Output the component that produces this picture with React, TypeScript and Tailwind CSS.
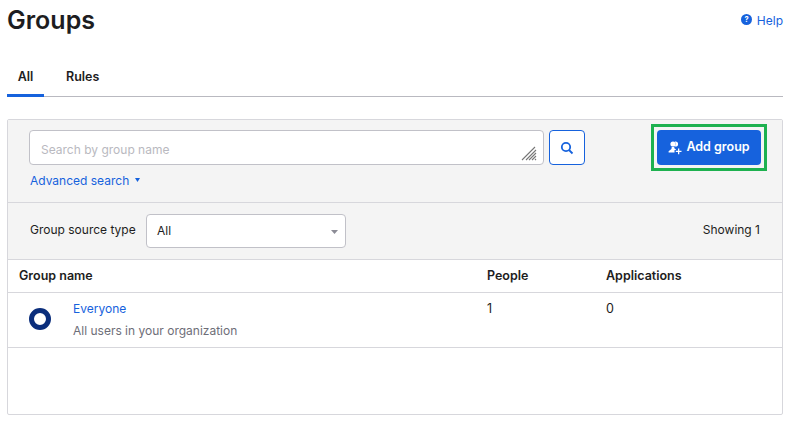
import React from "react";

const font = { fontFamily: '"Inter", "Liberation Sans", sans-serif' };

function Resize() {
  return (
    <svg width="16" height="16" viewBox="0 0 16 16" className="absolute right-[6px] bottom-[3px]" stroke="#777" strokeWidth="1.1" fill="none">
      <path d="M1 15L14 2M5 15L15 5M8 15L15 8M11 15L15 11M14 15L15 14" />
    </svg>
  );
}

export default function App() {
  return (
    <div className="w-[789px] h-[427px] bg-white overflow-hidden text-[#1d1d21]" style={font}>
      <div className="pl-[7px] pr-[6px]">
        <div className="flex justify-between h-[40px]">
          <h1 className="text-[25px] leading-[29px] font-semibold mt-[6px]">Groups</h1>
          <a className="flex items-center h-[16px] mt-[12px] text-[12px] text-[#1662dd] gap-[5px]">
            <svg width="11" height="11" viewBox="0 0 11 11" className="-ml-[1px] -mt-[1px]">
              <circle cx="5.5" cy="5.5" r="5.5" fill="#1662dd" />
              <text x="5.5" y="8.2" textAnchor="middle" fontSize="7.5" fontWeight="700" fill="#fff">?</text>
            </svg>
            <span className="mt-[1px]">Help</span>
          </a>
        </div>
        <div className="flex h-[57px] border-b border-[#b9b9c0] pt-[28px] text-[12.5px] font-semibold">
          <div className="w-[37px] h-[29px] pt-[1px] text-center leading-[16px] border-b-[3px] border-[#1662dd]">All</div>
          <div className="ml-[22px] pt-[1px] leading-[16px]">Rules</div>
        </div>
        <div className="mt-[22px] h-[296px] border border-[#d7d7dc] rounded-[2px] flex flex-col">
          <div className="h-[83px] bg-[#f4f4f4] border-b border-[#d7d7dc] flex pl-[21px] pr-[15px] shrink-0">
            <div className="w-[515px] pt-[10px]">
              <div className="relative h-[35px] bg-white border border-[#c1c1c8] rounded-[4px] flex items-center pl-[11px] pt-[4px] text-[12px] text-[#b9b9c0]">
                Search by group name
                <Resize />
              </div>
              <div className="mt-[8px] pl-[1px] flex items-center text-[12px] leading-[16px] text-[#1662dd]">
                Advanced search
                <svg width="5" height="4" viewBox="0 0 5 4" className="ml-[6px] -mt-[2px]"><path d="M0 0H5L2.5 4Z" fill="#1662dd" /></svg>
              </div>
            </div>
            <button className="ml-[5px] mt-[10px] w-[36px] h-[35px] bg-white border border-[#1662dd] rounded-[4px] flex items-center justify-center">
              <svg width="14" height="14" viewBox="0 0 14 14" fill="none" stroke="#1662dd" strokeWidth="1.8">
                <circle cx="6" cy="6" r="4.2" />
                <path d="M9 9L12.5 12.5" />
              </svg>
            </button>
            <div className="ml-auto mt-[4px] w-[116px] h-[47px] border-[3px] border-[#1db14f] flex items-center justify-center">
              <button className="w-[104px] h-[35px] bg-[#1662dd] rounded-[4px] text-white text-[12.5px] font-semibold flex items-center justify-center gap-[3px]">
                <svg width="15" height="15" viewBox="0 0 15 15" fill="#fff">
                  <circle cx="5" cy="4" r="2.6" />
                  <path d="M7.5 1.4a2.6 2.6 0 0 1 0 5.2c-.4 0-.6 0-.9-.2a3.6 3.6 0 0 0 0-4.8c.3-.2.5-.2.9-.2z" />
                  <path d="M3.7 7h2.6v1.2l1.5 1V10H6.5v2.4H0.6v-1.2l2.2-1.6C3.4 9.1 3.7 8.4 3.7 7z" />
                  <path d="M10 8.5h1.3v2.2h2.2V12h-2.2v2.2H10V12H7.8v-1.3H10z" />
                </svg>
                Add group
              </button>
            </div>
          </div>
          <div className="h-[57px] bg-[#f4f4f4] border-b border-[#d7d7dc] flex items-center pl-[22px] pr-[22px] text-[12px] shrink-0">
            <span className="w-[105px] whitespace-nowrap -mt-[2px]">Group source type</span>
            <div className="relative ml-[11px] w-[200px] h-[34px] bg-white border border-[#c1c1c8] rounded-[4px] flex items-center pl-[10px]">
              All
              <svg width="7" height="4" viewBox="0 0 7 4" className="absolute right-[7px] top-[15px]"><path d="M0 0H7L3.5 4Z" fill="#8c8c96" /></svg>
            </div>
            <span className="ml-auto -mt-[2px]">Showing 1</span>
          </div>
          <div className="h-[33px] border-b border-[#d7d7dc] flex items-center text-[12.5px] font-semibold shrink-0">
            <div className="w-[479px] pl-[11px]">Group name</div>
            <div className="w-[119px]">People</div>
            <div>Applications</div>
          </div>
          <div className="h-[55px] border-b border-[#d7d7dc] flex text-[12.5px] shrink-0">
            <div className="w-[479px] flex">
              <div className="ml-[21px] mt-[15px] w-[22px] h-[22px] rounded-full border-[5.5px] border-[#0b2e7c]" />
              <div className="ml-[22px]">
                <div className="mt-[8px] leading-[16px] text-[12px] text-[#1662dd]">Everyone</div>
                <div className="mt-[6px] leading-[16px] text-[12px] text-[#6e6e78]">All users in your organization</div>
              </div>
            </div>
            <div className="w-[119px] pt-[8px] leading-[16px]">1</div>
            <div className="pt-[8px] leading-[16px]">0</div>
          </div>
        </div>
      </div>
    </div>
  );
}
